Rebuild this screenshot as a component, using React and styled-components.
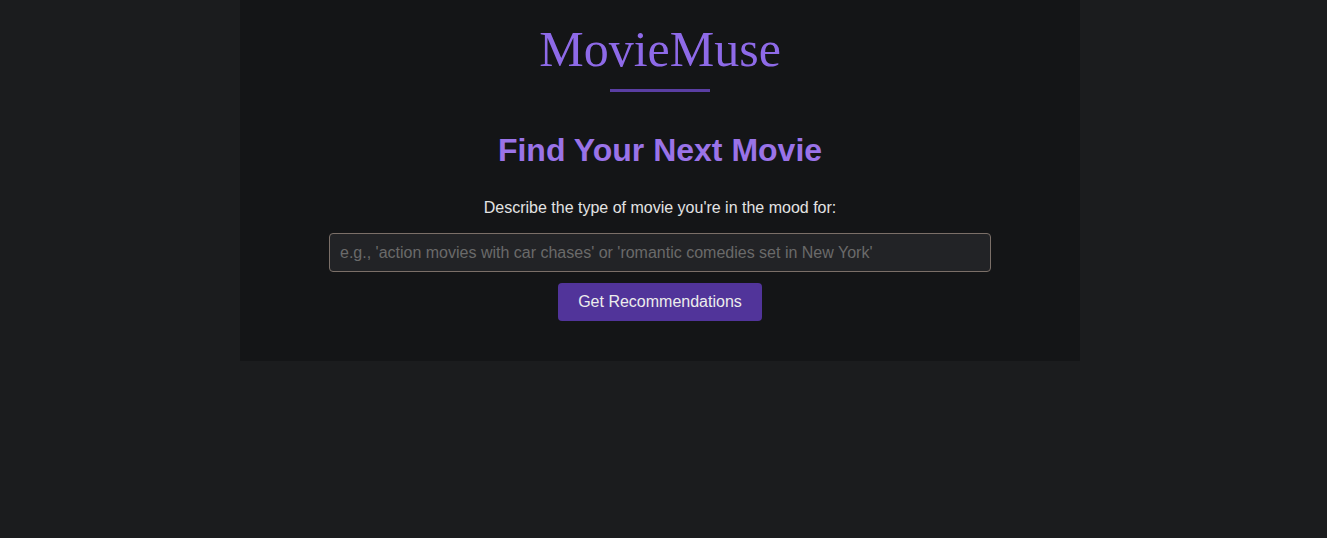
import React, { useState } from 'react'
import styled, { createGlobalStyle } from 'styled-components'

const GlobalStyle = createGlobalStyle`
    html, body {
        margin: 0;
        padding: 0;
        background: #1b1c1e;
        font-family: "Liberation Sans", Arial, sans-serif;
    }
    * { box-sizing: border-box; }
`
const Page = styled.div`
    min-height: 538px;
    display: flex;
    justify-content: center;
    padding-right: 7px;
`
const Panel = styled.main`
    width: 840px;
    height: 361px;
    background: #141517;
    display: flex;
    flex-direction: column;
    align-items: center;
    padding-top: 19px;
`
const Logo = styled.h1`
    margin: 0;
    font-family: "Liberation Serif", "DejaVu Serif", serif;
    font-weight: 400;
    font-size: 50px;
    line-height: 60px;
    color: #8e6ae8;
`
const Divider = styled.div`
    width: 100px;
    height: 3px;
    margin-top: 10px;
    background: #5a3ea3;
`
const Heading = styled.h2`
    margin: 38px 0 0 0;
    font-size: 32px;
    font-weight: 700;
    line-height: 40px;
    color: #9a73e8;
`
const Label = styled.label`
    margin-top: 28px;
    font-size: 16px;
    line-height: 20px;
    color: #e3e3e3;
`
const Input = styled.input`
    margin-top: 15px;
    width: 662px;
    height: 39px;
    padding: 0 10px;
    background: #222326;
    border: 1px solid #7b6f68;
    border-radius: 4px;
    color: #e3e3e3;
    font-family: "Liberation Sans", Arial, sans-serif;
    font-size: 16px;
    outline: none;
    &::placeholder {
        color: #6a6a6a;
    }
`
const Button = styled.button`
    margin-top: 11px;
    width: 204px;
    height: 38px;
    border: none;
    border-radius: 4px;
    background: #51349a;
    color: #ececec;
    font-family: "Liberation Sans", Arial, sans-serif;
    font-size: 16px;
    cursor: pointer;
`

export default function App() {
    const [query, setQuery] = useState('')
    return (
        <Page>
            <GlobalStyle />
            <Panel>
                <Logo>MovieMuse</Logo>
                <Divider />
                <Heading>Find Your Next Movie</Heading>
                <Label htmlFor="mood">Describe the type of movie you're in the mood for:</Label>
                <Input
                    id="mood"
                    value={query}
                    onChange={e => setQuery(e.target.value)}
                    placeholder="e.g., 'action movies with car chases' or 'romantic comedies set in New York'"
                />
                <Button>Get Recommendations</Button>
            </Panel>
        </Page>
    )
}
